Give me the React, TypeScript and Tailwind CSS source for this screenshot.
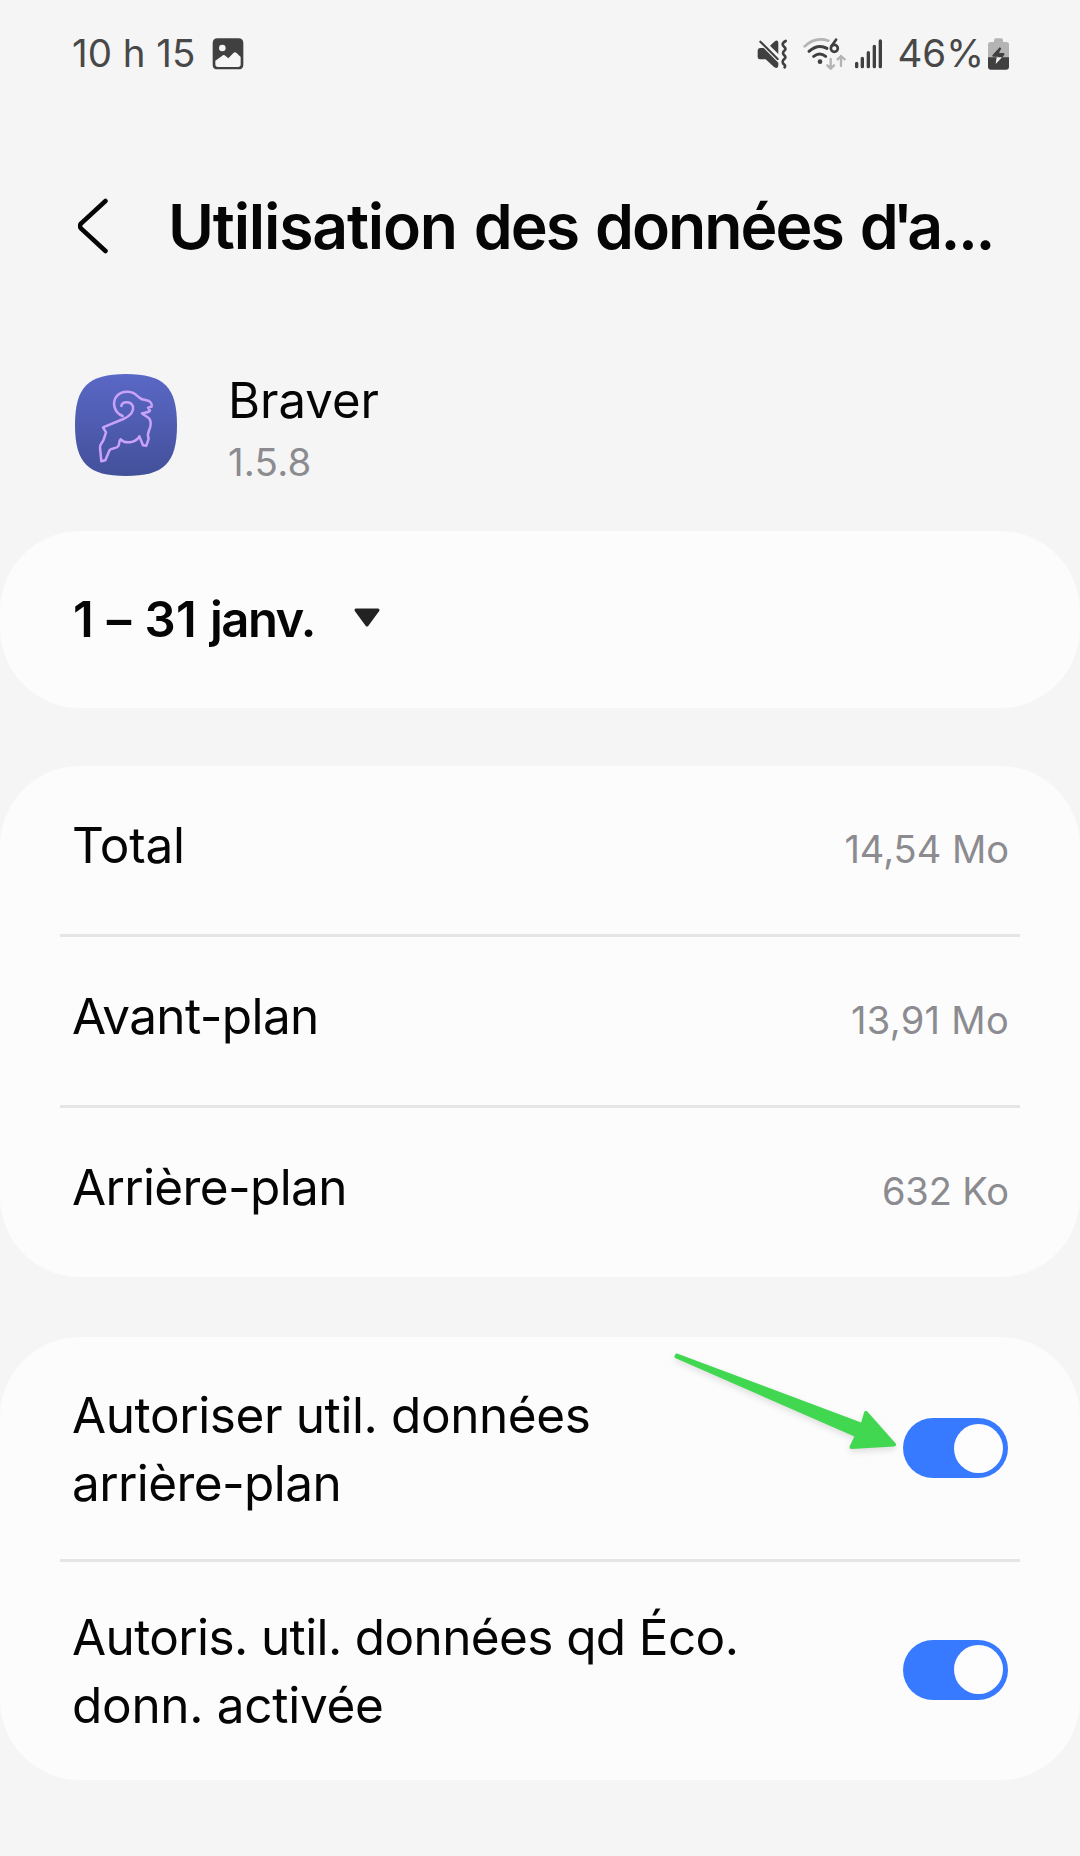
function ImageIcon() {
  return (
    <svg className="h-8 w-8" viewBox="0 0 96 96">
      <path
        fillRule="evenodd"
        fill="#404040"
        d="M17 1H79Q94 1 94 16V80Q94 94 79 94H17Q2 94 2 80V16Q2 1 17 1ZM10 68V79Q10 87 18 87H78Q86 87 86 79V57L73 44Q69 41 65 44L49 61L38 52Q34 50 31 53ZM31 20A10 10 0 1 0 31 40A10 10 0 1 0 31 20Z"
      />
    </svg>
  );
}

function MuteIcon() {
  return (
    <svg className="h-[30px] w-[31px]" viewBox="52 55 93 90">
      <path d="M62 82Q54 82 54 92V109Q54 116 61 116H78L103 139Q116 147 116 134V126L72 82Z" fill="#404040" />
      <path d="M91 75L103 64Q116 54 116 68V100Z" fill="#404040" />
      <path d="M62 63L114 115" stroke="#404040" strokeWidth="6.5" strokeLinecap="round" />
      <path
        d="M138 61Q129 66 129 71Q129 76 134 79Q139 83 136 88Q130 93 130 97Q130 101 135 105Q139 110 135 114Q129 118 129 123Q129 128 133 131Q138 135 135 140"
        stroke="#404040"
        strokeWidth="8"
        strokeLinecap="round"
        fill="none"
      />
    </svg>
  );
}

function WifiIcon() {
  return (
    <svg className="h-8 w-[43px]" viewBox="187 52 129 96" fill="none" strokeLinecap="round">
      <path d="M192 77Q223 47 263 60" stroke="#b4b4b4" strokeWidth="8" />
      <path d="M205 92Q232 68 259 83" stroke="#404040" strokeWidth="9" />
      <path d="M219 107Q237 93 255 107" stroke="#404040" strokeWidth="9" />
      <circle cx="238" cy="123" r="7" fill="#404040" />
      <path d="M286 57L272 77" stroke="#404040" strokeWidth="8" />
      <circle cx="281" cy="83" r="10.5" stroke="#404040" strokeWidth="8" />
      <path d="M270 115V143M260 134L270 144L280 134" stroke="#b4b4b4" strokeWidth="7" />
      <path d="M301 136V106M291 116L301 106L312 116" stroke="#b4b4b4" strokeWidth="7" />
    </svg>
  );
}

function SignalIcon() {
  return (
    <svg className="h-[30px] w-[27px]" viewBox="345 54 81 90" stroke="#404040" strokeWidth="10" strokeLinecap="round">
      <path d="M350 127V137M367 112V137M385 95V137M403 76V137M421 60V137" />
    </svg>
  );
}

function BatteryIcon() {
  return (
    <svg className="h-8 w-[21px]" viewBox="744 52 63 96">
      <path d="M762 59Q762 53 768 53H783Q789 53 789 59V64H799Q807 64 807 72V112H744V72Q744 64 752 64H762Z" fill="#b4b4b4" />
      <path d="M744 110H807V138Q807 147 798 147H753Q744 147 744 138Z" fill="#404040" />
      <path d="M779 80L757 104Q756 108 760 108H775L769 112H786L793 102Q795 98 790 97H777L784 83Z" fill="#404040" />
      <path d="M770 110L767 130L786 110Z" fill="#f5f5f5" />
    </svg>
  );
}

function RamLogo() {
  return (
    <svg className="h-[102px] w-[102px] shrink-0" viewBox="45 42 306 306">
      <defs>
        <linearGradient id="tile" x1="0" y1="0" x2="0" y2="1">
          <stop offset="0" stopColor="#5a68c6" />
          <stop offset="1" stopColor="#43509a" />
        </linearGradient>
      </defs>
      <path
        d="M198 42C312 42 351 81 351 195C351 309 312 348 198 348C84 348 45 309 45 195C45 81 84 42 198 42Z"
        fill="url(#tile)"
      />
      <path
        d="M184 138C186 123 214 122 219 140C222 157 210 168 190 177L129 202L138 217L131 239C128 248 120 251 120 263L124 304L136 301L149 270C156 262 170 267 175 258C180 251 175 243 182 238C194 252 226 250 238 229L249 256L259 257L266 236C258 215 272 212 272 192C272 170 260 173 246 160C256 158 265 158 270 152L264 143L275 140C277 130 272 123 256 120C240 119 240 113 232 108C218 92 189 90 172 106C154 126 162 158 188 168"
        fill="none"
        stroke="#c9a2fb"
        strokeWidth="7.5"
        strokeLinejoin="round"
        strokeLinecap="round"
      />
    </svg>
  );
}

function UsageRow({ label, labelClass, value, valueClass, last }: {
  label: string;
  labelClass: string;
  value: string;
  valueClass: string;
  last?: boolean;
}) {
  return (
    <div className={last ? "mx-[60px] h-[169px]" : "mx-[60px] h-[171px] border-b-[3px] border-[#e5e5e6]"}>
      <div className="flex items-baseline justify-between pt-[49px] pl-3 pr-[11px] leading-[60px]">
        <span className={`text-[49.5px] ${labelClass}`}>{label}</span>
        <span className={`text-[38px] text-[#8b8b90] ${valueClass}`}>{value}</span>
      </div>
    </div>
  );
}

function Toggle() {
  return (
    <span role="switch" aria-checked="true" className="flex h-[60px] w-[105px] shrink-0 items-center justify-end rounded-full bg-[#387aff] pr-[5px]">
      <span className="size-[49px] rounded-full bg-[#fdfdfd]" />
    </span>
  );
}

export default function App() {
  return (
    <main className="h-[1856px] w-[1080px] overflow-hidden bg-[#f5f5f6] font-['Inter',sans-serif] text-[#050505]">
      <div className="flex h-[108px] items-center pl-[72px] pr-[71px] text-[38.5px] text-[#484848]">
        <span>10 h 15</span>
        <span className="ml-[17px]"><ImageIcon /></span>
        <div className="ml-auto flex items-center">
          <MuteIcon />
          <span className="ml-[15px]"><WifiIcon /></span>
          <span className="ml-[9px]"><SignalIcon /></span>
          <span className="ml-[15px]">46%</span>
          <span className="ml-[4px]"><BatteryIcon /></span>
        </div>
      </div>

      <header className="flex h-[236px] items-center pl-[78px]">
        <svg className="h-[56px] w-[31px] shrink-0" viewBox="0 0 31 56" fill="none">
          <path d="M27.500 3L3 25.500Q1 28 3 30.500L27.500 53" stroke="#050505" strokeWidth="4.5" strokeLinecap="round" />
        </svg>
        <h1 className="ml-[59px] whitespace-nowrap pt-px text-[62.500px] font-semibold tracking-[-2px] [word-spacing:3.2px]">
          <span className="tracking-[-1.200px]">Utilisation</span> des données <span className="tracking-[-6px]">d'</span><span className="tracking-[-2.500px]">a...</span>
        </h1>
      </header>

      <section className="flex h-[187px] pl-[75px]">
        <div className="pt-[30px]"><RamLogo /></div>
        <div className="ml-[51px] pt-[26px]">
          <p className="text-[49px] leading-[61px]">Braver</p>
          <p className="text-[38.5px] leading-[63px] tracking-[0.200px] text-[#8b8b90]">1.5.8</p>
        </div>
      </section>

      <section className="flex h-[177px] items-center rounded-[80px] bg-[#fcfcfc] pl-[73px]">
        <span className="pt-px text-[49px] font-semibold tracking-[0.4px]">1 – 31 <span className="tracking-[-1.500px]">janv.</span></span>
        <svg className="ml-[38px] mb-[3px] h-[20px] w-[28px]" viewBox="0 0 28 20">
          <path d="M3 2H25L14 17Z" fill="#222" stroke="#222" strokeWidth="3" strokeLinejoin="round" />
        </svg>
      </section>

      <section className="mt-[58px] rounded-[80px] bg-[#fcfcfc]">
        <UsageRow label="Total" labelClass="tracking-[-0.25px]" value="14,54 Mo" valueClass="tracking-normal" />
        <UsageRow label="Avant-plan" labelClass="tracking-[-0.6px]" value="13,91 Mo" valueClass="tracking-[0.3px]" />
        <UsageRow label="Arrière-plan" labelClass="tracking-[-0.65px]" value="632 Ko" valueClass="tracking-[-0.1px]" last />
      </section>

      <section className="relative mt-[60px] rounded-[80px] bg-[#fcfcfc]">
        <div className="mx-[60px] flex h-[225px] items-center justify-between border-b-[3px] border-[#e5e5e6] pl-3 pr-3">
          <p className="pt-[2px] text-[49.5px] leading-[68px]">
            <span className="tracking-[-0.400px]">Autoriser util. données</span><br />
            <span className="tracking-[-0.600px]">arrière-plan</span>
          </p>
          <Toggle />
        </div>
        <div className="mx-[60px] flex h-[218px] items-center justify-between pl-3 pr-3">
          <p className="text-[49.5px] leading-[68px]">
            <span className="tracking-[-0.62px]">Autoris. util. données qd Éco.</span><br />
            <span className="tracking-[-0.3px]">donn. activée</span>
          </p>
          <div className="pb-[3px]"><Toggle /></div>
        </div>
        <svg className="absolute left-[670px] top-[12px] h-[110px] w-[232px] drop-shadow-[0_3px_3px_rgba(0,0,0,0.12)]" viewBox="670 1349 232 110">
          <path
            d="M677 1355.500L862.500 1425L866 1413L894 1444.500L851.500 1447L857 1435.500L676.500 1356.500Z"
            fill="#41d750"
            stroke="#41d750"
            strokeWidth="4"
            strokeLinejoin="round"
          />
        </svg>
      </section>
    </main>
  );
}
